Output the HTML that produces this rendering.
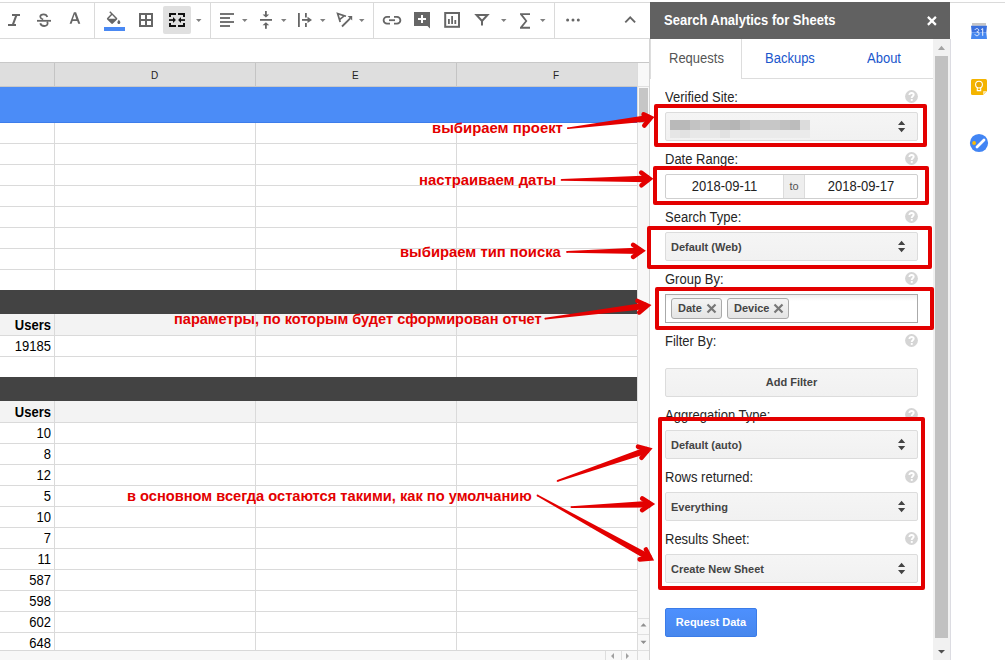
<!DOCTYPE html>
<html><head><meta charset="utf-8">
<style>
*{box-sizing:border-box;margin:0;padding:0}
html,body{width:1005px;height:660px;overflow:hidden;background:#fff;font-family:"Liberation Sans",sans-serif;position:relative}
.a{position:absolute}
.hl{position:absolute;height:1px;background:#dadada}
.vl{position:absolute;width:1px;background:#dadada}
.num{position:absolute;left:0;width:51px;text-align:right;font-size:13px;color:#000;line-height:15px;transform:scaleY(1.1);transform-origin:50% 12px}
.lbl{position:absolute;left:665px;font-size:13px;color:#262626;line-height:15px;transform:scaleY(1.1);transform-origin:0 12px}
.tb{position:absolute;font-size:13px;line-height:15px;transform:scaleY(1.1);transform-origin:0 12px}
.q{position:absolute;left:905px;width:13px;height:13px}
.sel{position:absolute;left:665px;width:253px;height:29px;border:1px solid #dcdcdc;border-radius:2px;background:linear-gradient(#f5f5f5,#f1f1f1);font-size:11px;font-weight:bold;color:#444;padding-left:5px;line-height:29px}
.arr{position:absolute;left:897px;width:9px;height:13px}
.red{position:absolute;border:4px solid #e30000;border-radius:2px}
.ann{position:absolute;font-size:14.6px;font-weight:bold;color:#e30000;white-space:nowrap;line-height:17px}
</style></head><body>

<!-- top lines -->
<div class="hl" style="left:0;top:2px;width:1005px;background:#dadada"></div>
<div class="hl" style="left:0;top:38px;width:650px;background:#dadada"></div>
<div class="vl" style="left:94px;top:3px;height:35px;background:#dadada"></div>
<div class="vl" style="left:210px;top:3px;height:35px;background:#dadada"></div>
<div class="vl" style="left:373px;top:3px;height:35px;background:#dadada"></div>
<div class="vl" style="left:554px;top:3px;height:35px;background:#dadada"></div>

<!-- merge highlight -->
<div class="a" style="left:163px;top:6px;width:28px;height:28px;background:#e0e0e0;border-radius:2px"></div>

<!-- toolbar icons -->
<svg class="a" style="left:0;top:0" width="650" height="38" viewBox="0 0 650 38">
 <g fill="#666" stroke="none">
  <!-- italic -->
  <rect x="12" y="14" width="8" height="2"/>
  <rect x="8" y="24" width="8" height="2"/>
  <polygon points="15,16 17.2,16 14.2,24 12,24"/>
  <!-- A -->
  <path d="M73.9,12.2h2.2l4.2,11.6h-2.1l-1-2.9h-4.6l-1,2.9h-2.0zM72.9,19.3h3.4l-1.7,-5z"/>
  <!-- drop -->
  
  <!-- blue bar -->
  <rect x="104" y="27" width="21" height="4" fill="#4a89f3"/>
  <!-- dropdown arrows -->
  <path d="M196,19h5.5l-2.75,3z M242,19h5.5l-2.75,3z M281,19h5.5l-2.75,3z M320,19h5.5l-2.75,3z M359,19h5.5l-2.75,3z M501,19h5.5l-2.75,3z M540,19h5.5l-2.75,3z" fill="#808080"/>
  <!-- align left -->
  <rect x="220" y="13.1" width="14" height="1.8"/>
  <rect x="220" y="17.1" width="10" height="1.8"/>
  <rect x="220" y="21.1" width="14" height="1.8"/>
  <rect x="220" y="25.1" width="10" height="1.8"/>
  <!-- vertical align -->
  <rect x="260" y="19" width="12" height="1.8"/>
  <rect x="265" y="11" width="1.8" height="4"/>
  <path d="M262.6,14.5h6.6l-3.3,3z"/>
  <rect x="265" y="24.8" width="1.8" height="4"/>
  <path d="M262.6,25.3h6.6l-3.3,-3z"/>
  <!-- text wrap -->
  <rect x="298" y="13" width="1.8" height="14"/>
  <rect x="305" y="13" width="1.8" height="4.5"/>
  <rect x="305" y="23" width="1.8" height="4"/>
  <rect x="302" y="19" width="7" height="1.8"/>
  <path d="M307.5,16.8 L312,19.9 L307.5,23z"/>
  <!-- comment -->
  <path d="M414,12h16v16.5l-2.5,-2.5h-13.5z"/>
  <!-- chart bars -->
  <rect x="448" y="19" width="1.8" height="5"/>
  <rect x="451.2" y="16" width="1.8" height="8"/>
  <rect x="454.4" y="20" width="1.8" height="4"/>
  <!-- sigma -->
  <path d="M520,13.2h10v1.9h-7.2l4.6,5.8l-4.6,5.9h7.2v1.9h-10v-1.5l5.2,-6.3l-5.2,-6.3z"/>
  <!-- dots -->
  <circle cx="567.6" cy="19.9" r="1.5"/><circle cx="573" cy="19.9" r="1.5"/><circle cx="578.3" cy="19.9" r="1.5"/>
 </g>
 <g fill="none" stroke="#666" stroke-width="1.8">
  <!-- strikethrough S -->
  <path d="M47.3,17 C46.8,15.2 45.5,14.3 43.6,14.3 C41.6,14.3 40.1,15.4 40.3,17 C40.4,18.2 41.5,18.9 43.2,19.5"/>
  <path d="M40.3,23.3 C40.7,25.1 42.1,26 44.2,26 C46.5,26 47.9,24.6 47.6,23 C47.5,22.5 47.3,22.1 46.9,21.8"/>
  <line x1="37" y1="20.8" x2="51" y2="20.8"/>
  <!-- bucket -->
  
  <!-- grid -->
  <rect x="140" y="14" width="12" height="12" stroke-width="2"/>
  <line x1="146" y1="14" x2="146" y2="26" stroke-width="2"/>
  <line x1="140" y1="20" x2="152" y2="20" stroke-width="2"/>
  <!-- rotate -->
  <path d="M340.2,22 L337.6,13.6 L346,16.3" stroke-width="1.7"/>
  <path d="M339.5,19.7 L344.2,15.9" stroke-width="1.5"/>
  <line x1="342" y1="26.5" x2="350.2" y2="18.3" stroke-width="1.8"/>
  <!-- link -->
  <path d="M390,16.8 h-3 a3.4,3.4 0 0 0 0,6.8 h3" stroke-width="1.8"/>
  <path d="M394,16.8 h3 a3.4,3.4 0 0 1 0,6.8 h-3" stroke-width="1.8"/>
  <line x1="389" y1="20.2" x2="395" y2="20.2" stroke-width="1.8"/>
  <!-- chart frame -->
  <rect x="445.2" y="13" width="13.8" height="13.8" stroke-width="2"/>
  <!-- filter -->
  <path d="M476.5,15 L487.5,15 L482,21 Z" stroke-width="2"/>
  <line x1="482" y1="20" x2="482" y2="25.5" stroke-width="2"/>
  <!-- chevron -->
  <path d="M625.3,22.3 L630.2,17.3 L635.1,22.3" stroke-width="1.9"/>
 </g>
 <!-- bucket -->
 <path d="M347.6,15.9 L352.2,15.9 L352.2,20.5 Z" fill="#666"/>
 <path transform="translate(104.6,11.2) scale(0.75)" d="M16.56 8.94L7.62 0 6.21 1.41l2.38 2.38-5.15 5.15c-.59.59-.59 1.54 0 2.12l5.5 5.5c.29.29.68.44 1.06.44s.77-.15 1.06-.44l5.5-5.5c.59-.58.59-1.53 0-2.12zM5.21 10L10 5.21 14.79 10H5.21zM19 11.5s-2 2.17-2 3.5c0 1.1.9 2 2 2s2-.9 2-2c0-1.33-2-3.5-2-3.5z" fill="#666"/>
 <!-- comment plus -->
 <rect x="421" y="15" width="2" height="8" fill="#fff"/>
 <rect x="418" y="18" width="8" height="2" fill="#fff"/>
 <!-- merge icon -->
 <g fill="#111">
  <path d="M169,13h7v2h-5v2h-2z"/>
  <path d="M178,13h7v4h-2v-2h-5z"/>
  <path d="M169,23h2v2h5v2h-7z"/>
  <path d="M183,23h2v4h-7v-2h5z"/>
  <rect x="169" y="19.2" width="5" height="1.7"/>
  <path d="M173,16.9 L175.9,20 L173,23.1z"/>
  <rect x="180" y="19.2" width="5" height="1.7"/>
  <path d="M181,16.9 L178.1,20 L181,23.1z"/>
 </g>
</svg>

<!-- formula bar line / header -->
<div class="hl" style="left:0;top:62px;width:650px;background:#c8c8c8"></div>
<div class="a" style="left:0;top:63px;width:637px;height:24px;background:#dedede"></div>
<div class="hl" style="left:0;top:86px;width:637px;background:#c8c8c8"></div>
<div class="vl" style="left:54px;top:63px;height:23px;background:#c4c4c4"></div>
<div class="vl" style="left:255px;top:63px;height:23px;background:#c4c4c4"></div>
<div class="vl" style="left:456px;top:63px;height:23px;background:#c4c4c4"></div>
<div class="a" style="left:151px;top:70px;font-size:10px;color:#222;line-height:12px">D</div>
<div class="a" style="left:352px;top:70px;font-size:10px;color:#222;line-height:12px">E</div>
<div class="a" style="left:553px;top:70px;font-size:10px;color:#222;line-height:12px">F</div>

<!-- grid -->
<div id="grid">
 <div class="vl" style="left:54px;top:123px;height:167px"></div>
 <div class="vl" style="left:255px;top:123px;height:167px"></div>
 <div class="vl" style="left:456px;top:123px;height:167px"></div>
 <div class="vl" style="left:54px;top:314px;height:63px"></div>
 <div class="vl" style="left:255px;top:314px;height:63px"></div>
 <div class="vl" style="left:456px;top:314px;height:63px"></div>
 <div class="vl" style="left:54px;top:401px;height:250px"></div>
 <div class="vl" style="left:255px;top:401px;height:250px"></div>
 <div class="vl" style="left:456px;top:401px;height:250px"></div>
 <div class="hl" style="left:0;top:143px;width:637px"></div>
 <div class="hl" style="left:0;top:164px;width:637px"></div>
 <div class="hl" style="left:0;top:185px;width:637px"></div>
 <div class="hl" style="left:0;top:206px;width:637px"></div>
 <div class="hl" style="left:0;top:227px;width:637px"></div>
 <div class="hl" style="left:0;top:248px;width:637px"></div>
 <div class="hl" style="left:0;top:269px;width:637px"></div>
 <div class="hl" style="left:0;top:335px;width:637px"></div>
 <div class="hl" style="left:0;top:356px;width:637px"></div>
 <div class="hl" style="left:0;top:422px;width:637px"></div>
 <div class="hl" style="left:0;top:443px;width:637px"></div>
 <div class="hl" style="left:0;top:464px;width:637px"></div>
 <div class="hl" style="left:0;top:485px;width:637px"></div>
 <div class="hl" style="left:0;top:506px;width:637px"></div>
 <div class="hl" style="left:0;top:527px;width:637px"></div>
 <div class="hl" style="left:0;top:548px;width:637px"></div>
 <div class="hl" style="left:0;top:569px;width:637px"></div>
 <div class="hl" style="left:0;top:590px;width:637px"></div>
 <div class="hl" style="left:0;top:611px;width:637px"></div>
 <div class="hl" style="left:0;top:632px;width:637px"></div>
</div>
<div class="a" style="left:0;top:87px;width:637px;height:36px;background:#4b8cf7;border-bottom:1px solid #3d7deb"></div>
<div class="a" style="left:0;top:290px;width:637px;height:24px;background:#434343"></div>
<div class="a" style="left:0;top:314px;width:637px;height:21px;background:#f3f3f3"></div>
<div class="vl" style="left:54px;top:314px;height:21px"></div><div class="vl" style="left:255px;top:314px;height:21px"></div><div class="vl" style="left:456px;top:314px;height:21px"></div>
<div class="a" style="left:0;top:377px;width:637px;height:24px;background:#434343"></div>
<div class="a" style="left:0;top:401px;width:637px;height:21px;background:#f3f3f3"></div>
<div class="vl" style="left:54px;top:401px;height:21px"></div><div class="vl" style="left:255px;top:401px;height:21px"></div><div class="vl" style="left:456px;top:401px;height:21px"></div>

<div class="num" style="top:318px;font-weight:bold">Users</div>
<div class="num" style="top:339px">19185</div>
<div class="num" style="top:405px;font-weight:bold">Users</div>
<div class="num" style="top:426px">10</div>
<div class="num" style="top:447px">8</div>
<div class="num" style="top:468px">12</div>
<div class="num" style="top:489px">5</div>
<div class="num" style="top:510px">10</div>
<div class="num" style="top:531px">7</div>
<div class="num" style="top:552px">11</div>
<div class="num" style="top:573px">587</div>
<div class="num" style="top:594px">598</div>
<div class="num" style="top:615px">602</div>
<div class="num" style="top:636px">648</div>

<!-- bottom horizontal scrollbar -->
<div class="a" style="left:0;top:650px;width:637px;height:10px;background:#f8f8f8;border-top:1px solid #d9d9d9"></div>
<div class="vl" style="left:605px;top:651px;height:9px;background:#dedede"></div>
<div class="vl" style="left:621px;top:651px;height:9px;background:#dedede"></div>
<svg class="a" style="left:600px;top:651px" width="40" height="9"><path d="M11,5 l3,-3 v6z M29,5 l-3,-3 v6z" fill="#a0a0a0"/></svg>

<!-- vertical sheet scrollbar -->
<div class="a" style="left:637px;top:63px;width:13px;height:597px;background:#f8f8f8;border-left:1px solid #dcdcdc;border-right:1px solid #d4d4d4"></div><div class="hl" style="left:638px;top:650px;width:11px;background:#e0e0e0"></div>
<div class="vl" style="left:649px;top:39px;height:24px;background:#d4d4d4"></div>
<div class="a" style="left:639px;top:88px;width:9px;height:35px;background:#c6c6c6"></div>
<div class="hl" style="left:638px;top:618px;width:11px;background:#e0e0e0"></div><div class="hl" style="left:638px;top:86px;width:11px;background:#e0e0e0"></div>
<div class="hl" style="left:638px;top:634px;width:11px;background:#e0e0e0"></div>
<svg class="a" style="left:638px;top:619px" width="11" height="31"><path d="M2.5,7.5 h6 l-3,-3.3z M2.5,21.8 h6 l-3,3.3z" fill="#909090"/></svg>

<!-- side panel -->
<div class="a" style="left:650px;top:2px;width:300px;height:37px;background:#616161"></div>
<div class="a" style="left:664px;top:13px;font-size:13px;font-weight:bold;color:#fff;line-height:16px;transform:scaleY(1.1);transform-origin:0 12.5px">Search Analytics for Sheets</div>
<svg class="a" style="left:926px;top:15px" width="13" height="13"><path d="M1.9,1.9 L9.9,9.9 M9.9,1.9 L1.9,9.9" stroke="#fff" stroke-width="2.2"/></svg>

<div class="a" style="left:650px;top:39px;width:284px;height:612px;background:#fff"></div>
<!-- tabs -->
<div class="hl" style="left:741px;top:78px;width:193px;background:#dddddd"></div>
<div class="a" style="left:650px;top:39px;width:92px;height:40px;border:1px solid #dddddd;border-top:none;border-bottom:none;border-radius:0 0 0 0;background:#fff"></div>
<div class="tb" style="left:669px;top:51px;color:#555">Requests</div>
<div class="tb" style="left:765px;top:51px;color:#1a56cc">Backups</div>
<div class="tb" style="left:867px;top:51px;color:#1a56cc">About</div>

<!-- panel scrollbar -->
<div class="a" style="left:933px;top:39px;width:18px;height:621px;background:#f1f1f1;border-right:1px solid #dcdce2"></div>
<div class="a" style="left:935px;top:56px;width:13px;height:582px;background:#c1c1c1"></div>
<svg class="a" style="left:933px;top:39px" width="17" height="621"><path d="M5,10.9 h7 l-3.5,-4.2z" fill="#a3a3a3"/><path d="M5,611 h7 l-3.5,3.5z" fill="#505050"/></svg>

<!-- form -->
<div class="lbl" style="top:90px">Verified Site:</div>
<svg class="q" style="top:90px" width="13" height="13" viewBox="0 0 13 13"><circle cx="6.5" cy="6.5" r="6.4" fill="#d5d5d5"/><path d="M4.4,5.1 C4.4,3.7 5.3,3 6.6,3 C7.9,3 8.7,3.8 8.7,4.8 C8.7,6.2 6.7,6.3 6.7,8" fill="none" stroke="#fff" stroke-width="1.9"/><rect x="5.8" y="9" width="1.9" height="1.9" fill="#fff"/></svg>
<div class="sel" style="top:112px"></div>
<div class="a" style="left:670px;top:120px;width:140px;height:18px;background:linear-gradient(90deg,#b9b9b9 0,#b9b9b9 20px,#c3c3c3 20px,#c3c3c3 30px,#c9c9c9 30px,#c9c9c9 40px,#b9b9b9 40px,#b9b9b9 60px,#b5b5b5 60px,#b5b5b5 70px,#c1c1c1 70px,#c1c1c1 80px,#c7c7c7 80px,#c7c7c7 110px,#c1c1c1 110px,#c1c1c1 120px,#bcbcbc 120px,#bcbcbc 130px,#dcdcdc 130px,#dcdcdc 140px) top/100% 10px no-repeat,linear-gradient(90deg,#e6e6e6 0,#e6e6e6 10px,#e2e2e2 10px,#e2e2e2 20px,#e8e8e8 20px,#e8e8e8 50px,#e2e2e2 50px,#e2e2e2 60px,#ebebeb 60px) bottom/100% 8px no-repeat"></div>
<svg class="arr" style="top:120px" viewBox="0 0 9 13"><path d="M1,5 h7.2 l-3.6,-4.3z M1,8 h7.2 l-3.6,4.2z" fill="#444"/></svg>

<div class="lbl" style="top:152px">Date Range:</div>
<svg class="q" style="top:152px" width="13" height="13" viewBox="0 0 13 13"><circle cx="6.5" cy="6.5" r="6.4" fill="#d5d5d5"/><path d="M4.4,5.1 C4.4,3.7 5.3,3 6.6,3 C7.9,3 8.7,3.8 8.7,4.8 C8.7,6.2 6.7,6.3 6.7,8" fill="none" stroke="#fff" stroke-width="1.9"/><rect x="5.8" y="9" width="1.9" height="1.9" fill="#fff"/></svg>
<div class="a" style="left:665px;top:174px;width:253px;height:25px;border:1px solid #cfcfcf;border-radius:2px;background:#fff"></div>
<div class="a" style="left:783px;top:175px;width:22px;height:23px;background:#eeeeee;border-left:1px solid #dcdcdc;border-right:1px solid #dcdcdc;font-size:11px;color:#555;text-align:center;line-height:22px">to</div>
<div class="a" style="left:666px;top:179px;width:117px;text-align:center;font-size:13px;color:#222;line-height:15px;transform:scaleY(1.1);transform-origin:50% 12px">2018-09-11</div>
<div class="a" style="left:805px;top:179px;width:112px;text-align:center;font-size:13px;color:#222;line-height:15px;transform:scaleY(1.1);transform-origin:50% 12px">2018-09-17</div>

<div class="lbl" style="top:210px">Search Type:</div>
<svg class="q" style="top:210px" width="13" height="13" viewBox="0 0 13 13"><circle cx="6.5" cy="6.5" r="6.4" fill="#d5d5d5"/><path d="M4.4,5.1 C4.4,3.7 5.3,3 6.6,3 C7.9,3 8.7,3.8 8.7,4.8 C8.7,6.2 6.7,6.3 6.7,8" fill="none" stroke="#fff" stroke-width="1.9"/><rect x="5.8" y="9" width="1.9" height="1.9" fill="#fff"/></svg>
<div class="sel" style="top:232px">Default (Web)</div>
<svg class="arr" style="top:240px" viewBox="0 0 9 13"><path d="M1,5 h7.2 l-3.6,-4.3z M1,8 h7.2 l-3.6,4.2z" fill="#444"/></svg>

<div class="lbl" style="top:272px">Group By:</div>
<svg class="q" style="top:272px" width="13" height="13" viewBox="0 0 13 13"><circle cx="6.5" cy="6.5" r="6.4" fill="#d5d5d5"/><path d="M4.4,5.1 C4.4,3.7 5.3,3 6.6,3 C7.9,3 8.7,3.8 8.7,4.8 C8.7,6.2 6.7,6.3 6.7,8" fill="none" stroke="#fff" stroke-width="1.9"/><rect x="5.8" y="9" width="1.9" height="1.9" fill="#fff"/></svg>
<div class="a" style="left:665px;top:294px;width:253px;height:29px;border:1px solid #aaaaaa;background:linear-gradient(#f0f0f0 0,#fff 6px)"></div>
<div class="a" style="left:671px;top:298px;width:51px;height:21px;border:1px solid #aaa;border-radius:3px;background:linear-gradient(#f4f4f4,#e4e4e4);font-size:11px;font-weight:bold;color:#444;line-height:19px;padding-left:6px">Date</div>
<div class="a" style="left:727px;top:298px;width:62px;height:21px;border:1px solid #aaa;border-radius:3px;background:linear-gradient(#f4f4f4,#e4e4e4);font-size:11px;font-weight:bold;color:#444;line-height:19px;padding-left:6px">Device</div>
<svg class="a" style="left:706px;top:303px" width="11" height="11"><path d="M1.5,1.5 L9.5,9.5 M9.5,1.5 L1.5,9.5" stroke="#777" stroke-width="2.2"/></svg>
<svg class="a" style="left:773px;top:303px" width="11" height="11"><path d="M1.5,1.5 L9.5,9.5 M9.5,1.5 L1.5,9.5" stroke="#777" stroke-width="2.2"/></svg>

<div class="lbl" style="top:334px">Filter By:</div>
<svg class="q" style="top:334px" width="13" height="13" viewBox="0 0 13 13"><circle cx="6.5" cy="6.5" r="6.4" fill="#d5d5d5"/><path d="M4.4,5.1 C4.4,3.7 5.3,3 6.6,3 C7.9,3 8.7,3.8 8.7,4.8 C8.7,6.2 6.7,6.3 6.7,8" fill="none" stroke="#fff" stroke-width="1.9"/><rect x="5.8" y="9" width="1.9" height="1.9" fill="#fff"/></svg>
<div class="a" style="left:665px;top:368px;width:253px;height:29px;border:1px solid #dcdcdc;border-radius:2px;background:linear-gradient(#f5f5f5,#f1f1f1);font-size:11px;font-weight:bold;color:#444;text-align:center;line-height:27px">Add Filter</div>

<div class="lbl" style="top:408px">Aggregation Type:</div>
<svg class="q" style="top:408px" width="13" height="13" viewBox="0 0 13 13"><circle cx="6.5" cy="6.5" r="6.4" fill="#d5d5d5"/><path d="M4.4,5.1 C4.4,3.7 5.3,3 6.6,3 C7.9,3 8.7,3.8 8.7,4.8 C8.7,6.2 6.7,6.3 6.7,8" fill="none" stroke="#fff" stroke-width="1.9"/><rect x="5.8" y="9" width="1.9" height="1.9" fill="#fff"/></svg>
<div class="sel" style="top:430px">Default (auto)</div>
<svg class="arr" style="top:438px" viewBox="0 0 9 13"><path d="M1,5 h7.2 l-3.6,-4.3z M1,8 h7.2 l-3.6,4.2z" fill="#444"/></svg>

<div class="lbl" style="top:470px">Rows returned:</div>
<svg class="q" style="top:470px" width="13" height="13" viewBox="0 0 13 13"><circle cx="6.5" cy="6.5" r="6.4" fill="#d5d5d5"/><path d="M4.4,5.1 C4.4,3.7 5.3,3 6.6,3 C7.9,3 8.7,3.8 8.7,4.8 C8.7,6.2 6.7,6.3 6.7,8" fill="none" stroke="#fff" stroke-width="1.9"/><rect x="5.8" y="9" width="1.9" height="1.9" fill="#fff"/></svg>
<div class="sel" style="top:492px">Everything</div>
<svg class="arr" style="top:500px" viewBox="0 0 9 13"><path d="M1,5 h7.2 l-3.6,-4.3z M1,8 h7.2 l-3.6,4.2z" fill="#444"/></svg>

<div class="lbl" style="top:532px">Results Sheet:</div>
<svg class="q" style="top:532px" width="13" height="13" viewBox="0 0 13 13"><circle cx="6.5" cy="6.5" r="6.4" fill="#d5d5d5"/><path d="M4.4,5.1 C4.4,3.7 5.3,3 6.6,3 C7.9,3 8.7,3.8 8.7,4.8 C8.7,6.2 6.7,6.3 6.7,8" fill="none" stroke="#fff" stroke-width="1.9"/><rect x="5.8" y="9" width="1.9" height="1.9" fill="#fff"/></svg>
<div class="sel" style="top:554px">Create New Sheet</div>
<svg class="arr" style="top:562px" viewBox="0 0 9 13"><path d="M1,5 h7.2 l-3.6,-4.3z M1,8 h7.2 l-3.6,4.2z" fill="#444"/></svg>

<div class="a" style="left:665px;top:608px;width:92px;height:29px;border:1px solid #3b7ce8;border-radius:2px;background:linear-gradient(#4d90fe,#4787ed);font-size:11px;font-weight:bold;color:#fff;text-align:center;line-height:27px">Request Data</div>

<!-- right strip icons -->
<svg class="a" style="left:960px;top:15px" width="40" height="140" viewBox="960 15 40 140">
 <rect x="972" y="23" width="14" height="2.8" fill="#c6c6c6"/>
 <path d="M971,25.7 H987 L986.3,32.4 H971.7Z" fill="#3a70dd"/>
 <path d="M971.7,32.4 H986.3 L987,38.9 H971Z" fill="#4587f0"/>
 <path d="M975,30 C975.3,29 976,28.6 976.9,28.6 C978,28.6 978.7,29.3 978.7,30.3 C978.7,31.3 977.9,31.9 976.8,31.9 C978.1,31.9 979,32.6 979,33.8 C979,35 978.1,35.7 976.9,35.7 C975.9,35.7 975.1,35.1 974.9,34.2" fill="none" stroke="#eef3fe" stroke-width="0.95"/><path d="M981.2,29.6 L982.7,28.6 V35.8" fill="none" stroke="#eef3fe" stroke-width="1"/>
 <path d="M972.5,79 H985.5 Q987,79 987,80.5 V91 L983,95 H972.5 Q971,95 971,93.5 V80.5 Q971,79 972.5,79Z" fill="#f4b400"/>
 <path d="M983,95 L983,92 Q983,91 984,91 L987,91 Z" fill="#fbe3a0"/>
 <circle cx="979" cy="84.6" r="3.4" fill="#eaa800" stroke="#fff" stroke-width="1.1"/>
 <path d="M977.3,87.6 V90.6 H980.7 V87.6" fill="none" stroke="#fff" stroke-width="1.1"/>
 <circle cx="979" cy="143" r="9.1" fill="#4285f4"/>
 <line x1="977" y1="147" x2="984" y2="140" stroke="#fff" stroke-width="2.8" stroke-linecap="round"/>
 <circle cx="974.1" cy="143" r="1.9" fill="#fbbc04"/>
</svg>

<!-- red boxes -->
<div class="red" style="left:654px;top:104px;width:273px;height:43px"></div>
<div class="red" style="left:653px;top:166px;width:276px;height:39px"></div>
<div class="red" style="left:647px;top:226px;width:285px;height:43px"></div>
<div class="red" style="left:655px;top:287px;width:279px;height:43px"></div>
<div class="red" style="left:658px;top:417px;width:267px;height:173px"></div>

<!-- annotations -->
<div class="ann" style="left:431.5px;top:120px;transform:scaleX(1.019);transform-origin:0 0">выбираем проект</div>
<div class="ann" style="left:419.4px;top:172px;transform:scaleX(1.018);transform-origin:0 0">настраиваем даты</div>
<div class="ann" style="left:399.6px;top:244px;transform:scaleX(1.015);transform-origin:0 0">выбираем тип поиска</div>
<div class="ann" style="left:173.8px;top:311px;transform:scaleX(0.997);transform-origin:0 0">параметры, по которым будет сформирован отчет</div>
<div class="ann" style="left:126.8px;top:488px;transform:scaleX(1.0035);transform-origin:0 0">в основном всегда остаются такими, как по умолчанию</div>

<svg class="a" style="left:0;top:0" width="1005" height="660" viewBox="0 0 1005 660">
 <g fill="#e30000" stroke="#e30000" stroke-linecap="round">
<path d="M568.0,129.0 L650.2,121.3 L652.3,117.7 L649.4,114.7 L567.8,127.4Z" stroke="none"/>
<circle cx="567.9" cy="128.2" r="0.9" stroke="none"/>
<path d="M643.6,114.4 L650.8,117.9 L644.3,125.6" fill="none" stroke-width="4.6" stroke-linejoin="miter" stroke-miterlimit="10"/>
<path d="M561.6,180.7 L648.7,182.2 L651.1,178.8 L648.6,175.6 L561.6,179.1Z" stroke="none"/>
<circle cx="561.6" cy="179.9" r="0.9" stroke="none"/>
<path d="M641.2,172.6 L649.6,178.8 L641.5,185.2" fill="none" stroke-width="4.6" stroke-linejoin="miter" stroke-miterlimit="10"/>
<path d="M567.0,252.7 L640.9,254.1 L643.3,250.7 L640.8,247.5 L567.0,251.1Z" stroke="none"/>
<circle cx="567.0" cy="251.9" r="0.9" stroke="none"/>
<path d="M633.2,244.9 L641.8,250.7 L633.2,256.8" fill="none" stroke-width="4.6" stroke-linejoin="miter" stroke-miterlimit="10"/>
<path d="M545.4,319.4 L646.7,309.0 L648.8,305.4 L645.9,302.5 L545.2,317.8Z" stroke="none"/>
<circle cx="545.3" cy="318.6" r="0.9" stroke="none"/>
<path d="M637.4,301.0 L647.3,305.6 L639.2,312.4" fill="none" stroke-width="4.6" stroke-linejoin="miter" stroke-miterlimit="10"/>
<path d="M557.9,481.7 L648.7,452.9 L649.9,449.0 L646.5,446.7 L557.3,480.1Z" stroke="none"/>
<circle cx="557.6" cy="480.9" r="0.9" stroke="none"/>
<path d="M638.0,446.7 L648.5,449.5 L641.5,457.7" fill="none" stroke-width="4.6" stroke-linejoin="miter" stroke-miterlimit="10"/>
<path d="M571.4,507.9 L650.2,507.4 L652.5,504.0 L649.9,500.8 L571.4,506.3Z" stroke="none"/>
<circle cx="571.4" cy="507.1" r="0.9" stroke="none"/>
<path d="M642.3,498.5 L651.0,504.0 L642.2,510.1" fill="none" stroke-width="4.6" stroke-linejoin="miter" stroke-miterlimit="10"/>
<path d="M537.1,496.2 L648.0,560.8 L651.8,559.1 L651.2,555.0 L537.9,494.8Z" stroke="none"/>
<circle cx="537.5" cy="495.5" r="0.9" stroke="none"/>
<path d="M645.9,549.5 L650.5,558.4 L639.6,559.4" fill="none" stroke-width="4.6" stroke-linejoin="miter" stroke-miterlimit="10"/>
 </g>
</svg>
</body></html>
